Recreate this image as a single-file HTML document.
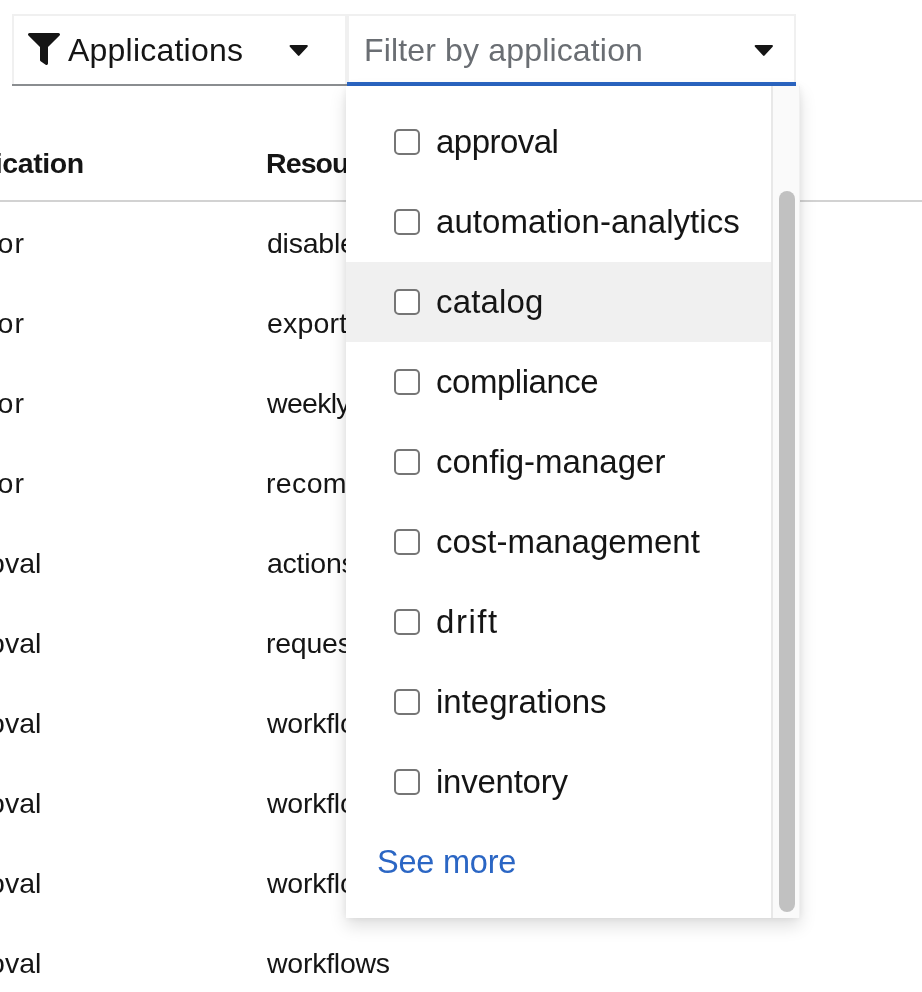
<!DOCTYPE html>
<html><head><meta charset="utf-8">
<style>
*{box-sizing:border-box;margin:0;padding:0}
html,body{width:922px;height:992px;overflow:hidden;background:#fff}
body{font-family:"Liberation Sans",sans-serif;color:#151515;position:relative}
.abs{position:absolute}
.btn{left:12px;top:14px;width:335px;height:72px;border:2px solid #f0f0f0;background:#fff}
.btnl{left:12px;top:84px;width:335px;height:2px;background:#8a8d90}
.sel{left:347px;top:14px;width:449px;height:72px;border:2px solid #f0f0f0;background:#fff}
.sell{left:347px;top:82px;width:449px;height:4px;background:#2b66c4}
.t{position:absolute;white-space:nowrap;line-height:40px;will-change:transform}
.menu{left:346px;top:86px;width:454px;height:832px;background:#fff;box-shadow:0 8px 16px rgba(3,3,3,.13),0 0 8px rgba(3,3,3,.07)}
.track{left:771px;top:86px;width:29px;height:832px;background:#fafafa;border-left:2px solid #e8e8e8;border-right:1px solid #f0f0f0}
.thumb{left:779px;top:191px;width:16px;height:721px;border-radius:8px;background:#c1c1c1}
.hl{left:346px;top:262px;width:425px;height:80px;background:#f0f0f0}
.cb{position:absolute;left:394px;width:26px;height:26px;border:2px solid #767676;border-radius:5px;background:#fff}
.line{left:0;top:200px;width:922px;height:2px;background:#d2d2d2}
</style></head><body>
<div class="abs line"></div>
<div class="t" style="left:-67.3px;top:143.1px;font-size:28.5px;letter-spacing:-0.4px;font-weight:bold">Application</div><div class="t" style="left:266.4px;top:143.1px;font-size:28.5px;letter-spacing:-0.9px;font-weight:bold">Resource type</div>
<div class="t" style="left:-74.2px;top:222.7px;font-size:28.5px;letter-spacing:1.0px">advisor</div><div class="t" style="left:-74.2px;top:302.7px;font-size:28.5px;letter-spacing:1.0px">advisor</div><div class="t" style="left:-74.2px;top:382.7px;font-size:28.5px;letter-spacing:1.0px">advisor</div><div class="t" style="left:-74.2px;top:462.7px;font-size:28.5px;letter-spacing:1.0px">advisor</div><div class="t" style="left:-68.3px;top:542.7px;font-size:28.5px;letter-spacing:0px">approval</div><div class="t" style="left:-68.3px;top:622.7px;font-size:28.5px;letter-spacing:0px">approval</div><div class="t" style="left:-68.3px;top:702.7px;font-size:28.5px;letter-spacing:0px">approval</div><div class="t" style="left:-68.3px;top:782.7px;font-size:28.5px;letter-spacing:0px">approval</div><div class="t" style="left:-68.3px;top:862.7px;font-size:28.5px;letter-spacing:0px">approval</div><div class="t" style="left:-68.3px;top:942.7px;font-size:28.5px;letter-spacing:0px">approval</div><div class="t" style="left:266.8px;top:222.7px;font-size:28.5px;letter-spacing:-0.25px">disable</div><div class="t" style="left:266.8px;top:302.7px;font-size:28.5px;letter-spacing:0.2px">exports</div><div class="t" style="left:267.1px;top:382.7px;font-size:28.5px;letter-spacing:-0.7px">weekly</div><div class="t" style="left:266.0px;top:462.7px;font-size:28.5px;letter-spacing:0.35px">recomm</div><div class="t" style="left:266.8px;top:542.7px;font-size:28.5px;letter-spacing:-0.25px">actions</div><div class="t" style="left:266.0px;top:622.7px;font-size:28.5px;letter-spacing:-0.25px">requests</div><div class="t" style="left:267.1px;top:702.7px;font-size:28.5px;letter-spacing:-0.25px">workflows</div><div class="t" style="left:267.1px;top:782.7px;font-size:28.5px;letter-spacing:-0.25px">workflows</div><div class="t" style="left:267.1px;top:862.7px;font-size:28.5px;letter-spacing:-0.25px">workflows</div><div class="t" style="left:267.1px;top:942.7px;font-size:28.5px;letter-spacing:-0.25px">workflows</div>
<div class="abs btn"></div><div class="abs btnl"></div>
<svg class="abs" style="left:28px;top:33px" width="32" height="32" viewBox="0 0 512 512"><path fill="#151515" d="M487.976 0H24.028C2.710 0-8.047 25.866 7.058 40.971L192 225.941V432c0 7.831 3.821 15.170 10.237 19.662l80 55.980C298.020 518.690 320 507.493 320 487.980V225.941l184.947-184.970C520.021 25.896 509.338 0 487.976 0z"/></svg>
<div class="t" style="left:68.4px;top:29.9px;font-size:32px;letter-spacing:0.22px">Applications</div>
<svg class="abs" style="left:289px;top:45px" width="22" height="14" viewBox="0 0 22 14"><path transform="translate(0.40,0.00)" fill="#151515" d="M1.200 0h16.200a1 1 0 0 1 0.750 1.700l-8.100 8.850a1.050 1.050 0 0 1-1.500 0L0.450 1.700A1 1 0 0 1 1.200 0z"/></svg>
<div class="abs sel"></div><div class="abs sell"></div>
<div class="t" style="left:363.7px;top:29.9px;font-size:32px;letter-spacing:0.16px;color:#6a6e73">Filter by application</div>
<svg class="abs" style="left:754px;top:45px" width="22" height="14" viewBox="0 0 22 14"><path transform="translate(0.50,0.00)" fill="#151515" d="M1.200 0h16.200a1 1 0 0 1 0.750 1.700l-8.100 8.850a1.050 1.050 0 0 1-1.500 0L0.450 1.700A1 1 0 0 1 1.200 0z"/></svg>
<div class="abs menu"></div>
<div class="abs hl"></div>
<div class="abs track"></div>
<div class="abs thumb"></div>
<div class="cb" style="top:129px"></div><div class="t" style="left:435.6px;top:121.6px;font-size:33px;letter-spacing:-0.52px">approval</div>
<div class="cb" style="top:209px"></div><div class="t" style="left:435.6px;top:201.6px;font-size:33px;letter-spacing:0.06px">automation-analytics</div>
<div class="cb" style="top:289px"></div><div class="t" style="left:435.8px;top:281.6px;font-size:33px;letter-spacing:0.15px">catalog</div>
<div class="cb" style="top:369px"></div><div class="t" style="left:435.8px;top:361.6px;font-size:33px;letter-spacing:-0.47px">compliance</div>
<div class="cb" style="top:449px"></div><div class="t" style="left:435.8px;top:441.6px;font-size:33px;letter-spacing:0.01px">config-manager</div>
<div class="cb" style="top:529px"></div><div class="t" style="left:435.8px;top:521.6px;font-size:33px;letter-spacing:-0.02px">cost-management</div>
<div class="cb" style="top:609px"></div><div class="t" style="left:435.8px;top:601.6px;font-size:33px;letter-spacing:1.56px">drift</div>
<div class="cb" style="top:689px"></div><div class="t" style="left:435.7px;top:681.6px;font-size:33px;letter-spacing:0.0px">integrations</div>
<div class="cb" style="top:769px"></div><div class="t" style="left:435.7px;top:761.6px;font-size:33px;letter-spacing:-0.25px">inventory</div>
<div class="t" style="left:376.5px;top:841.7px;font-size:32.5px;letter-spacing:-0.22px;color:#2b66c4">See more</div>
</body></html>
